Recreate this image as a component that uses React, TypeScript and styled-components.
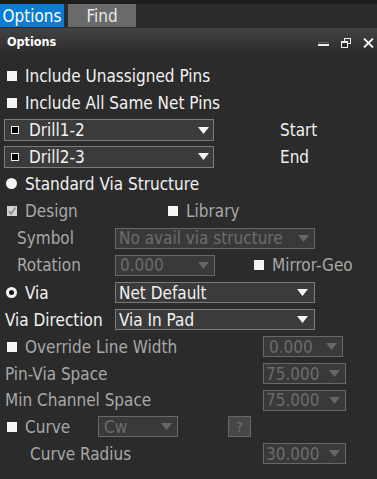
import React from "react";
import styled, { createGlobalStyle, css } from "styled-components";

const GlobalStyle = createGlobalStyle`
  html, body { margin: 0; padding: 0; background: #2b2b2b; overflow: hidden; }
  * { box-sizing: border-box; }
`;

const FONT = `"DejaVu Sans Condensed", "DejaVu Sans", sans-serif`;

const Frame = styled.div`
  width: 377px;
  height: 479px;
  display: flex;
  flex-direction: column;
  background: #2b2b2b;
  font-family: ${FONT};
  font-stretch: condensed;
  font-size: 17px;
  line-height: 20px;
  color: #f0f0f0;
`;

const TabBar = styled.div`
  height: 28px;
  padding-top: 4px;
  padding-bottom: 1px;
  display: flex;
  gap: 4px;
  background: #2c2c2c;
  box-shadow: inset 0 4px 0 #1d1d1d;
`;

const Tab = styled.div<{ $active?: boolean }>`
  width: ${(p) => (p.$active ? 64 : 68)}px;
  display: flex;
  align-items: center;
  justify-content: center;
  background: ${(p) => (p.$active ? "#0b7bd5" : "#6a6a6a")};
  color: ${(p) => (p.$active ? "#ffffff" : "#e8e8e8")};
`;

const TitleBar = styled.div`
  height: 27px;
  display: flex;
  align-items: center;
  justify-content: space-between;
  padding: 0 3px 0 7px;
  background: linear-gradient(#424242, #2b2b2b);
`;

const Title = styled.div`
  font-weight: bold;
  font-size: 12.5px;
  line-height: 16px;
  color: #ffffff;
`;

const Controls = styled.div`
  display: flex;
  align-items: center;
  gap: 12px;
  padding-top: 2px;
`;

const Body = styled.div`
  display: flex;
  flex-direction: column;
  padding-top: 7px;
`;

const Row = styled.div<{ $h: number; $pl?: number }>`
  height: ${(p) => p.$h}px;
  display: flex;
  align-items: center;
  padding-left: ${(p) => p.$pl ?? 0}px;
  white-space: nowrap;
`;

const Cell = styled.div<{ $w: number; $pl?: number }>`
  width: ${(p) => p.$w}px;
  flex: none;
  display: flex;
  align-items: center;
  padding-left: ${(p) => p.$pl ?? 0}px;
`;

const Label = styled.span<{ $dim?: boolean }>`
  color: ${(p) => (p.$dim ? "#a8a8a8" : "#f2f2f2")};
`;

const Box = styled.span<{ $checked?: boolean }>`
  width: 10px;
  height: 10px;
  flex: none;
  margin-left: 7px;
  margin-right: 8px;
  background: ${(p) => (p.$checked ? "#d2d2d2" : "#f4f4f4")};
  display: flex;
  align-items: center;
  justify-content: center;
`;

const Radio = styled.span<{ $ring?: boolean }>`
  width: 11px;
  height: 11px;
  flex: none;
  margin-left: 6px;
  margin-right: 8px;
  border-radius: 50%;
  background: #f4f4f4;
  ${(p) =>
    p.$ring &&
    css`
      background: #111;
      border: 3px solid #f4f4f4;
    `}
`;

const Select = styled.div<{ $w: number; $h?: number; $disabled?: boolean; $pl?: number; $pr?: number }>`
  width: ${(p) => p.$w}px;
  height: ${(p) => p.$h ?? 21}px;
  flex: none;
  display: flex;
  align-items: center;
  padding: 0 ${(p) => p.$pr ?? 5}px 0 ${(p) => p.$pl ?? 3}px;
  border: 1px solid ${(p) => (p.$disabled ? "#686868" : "#7c7c7c")};
  background: ${(p) => (p.$disabled ? "#393939" : "#3b3b3b")};
  color: ${(p) => (p.$disabled ? "#6c6c6c" : "#f2f2f2")};
`;

const SelectText = styled.span`
  flex: 1;
  min-width: 0;
`;

const Mini = styled.span`
  width: 8px;
  height: 8px;
  flex: none;
  margin: 0 10px 0 6px;
  border: 1px solid #f0f0f0;
  background: #000;
`;

const QButton = styled.div`
  width: 23px;
  height: 21px;
  flex: none;
  display: flex;
  align-items: center;
  justify-content: center;
  background: #474747;
  border: 1px solid #686868;
  color: #707070;
  font-size: 14px;
  line-height: 16px;
`;

const Side = styled.span<{ $ml: number }>`
  margin-left: ${(p) => p.$ml}px;
`;

const Arrow = ({ dim }: { dim?: boolean }) => (
  <svg width="11" height="7" viewBox="0 0 11 7" style={{ flex: "none" }}>
    <polygon points="0,0 11,0 5.5,7" fill={dim ? "#666666" : "#f4f4f4"} />
  </svg>
);

const Check = () => (
  <svg width="10" height="10" viewBox="0 0 10 10">
    <polyline points="2,5 4,8 8.5,1.5" fill="none" stroke="#8a8a8a" strokeWidth="1.4" />
  </svg>
);

const MinIcon = () => (
  <svg width="11" height="10" viewBox="0 0 11 10">
    <rect x="0" y="6" width="11" height="2" fill="#eeeeee" />
    <rect x="0" y="4" width="11" height="1" fill="#666" />
  </svg>
);

const RestoreIcon = () => (
  <svg width="10" height="10" viewBox="0 0 10 10">
    <rect x="3.5" y="0.5" width="6" height="5" fill="none" stroke="#eeeeee" strokeWidth="1" />
    <rect x="0.5" y="3.5" width="6" height="6" fill="#2f2f2f" stroke="#eeeeee" strokeWidth="1" />
    <rect x="0.5" y="3.5" width="6" height="1.5" fill="#eeeeee" />
  </svg>
);

const CloseIcon = () => (
  <svg width="11" height="10" viewBox="0 0 11 10">
    <path d="M1 0.5 L10 9.5 M10 0.5 L1 9.5" stroke="#f4f4f4" strokeWidth="1.8" />
  </svg>
);

export default function App() {
  return (
    <>
      <GlobalStyle />
      <Frame>
        <TabBar>
          <Tab $active>Options</Tab>
          <Tab>Find</Tab>
        </TabBar>
        <TitleBar>
          <Title>Options</Title>
          <Controls>
            <MinIcon />
            <RestoreIcon />
            <CloseIcon />
          </Controls>
        </TitleBar>
        <Body>
          <Row $h={27}>
            <Box />
            <Label>Include Unassigned Pins</Label>
          </Row>
          <Row $h={28}>
            <Box />
            <Label>Include All Same Net Pins</Label>
          </Row>
          <Row $h={26} $pl={4}>
            <Select $w={210} $h={22} $pl={0} $pr={4}>
              <Mini />
              <SelectText>Drill1-2</SelectText>
              <Arrow />
            </Select>
            <Side $ml={66}>Start</Side>
          </Row>
          <Row $h={27} $pl={4}>
            <Select $w={210} $h={22} $pl={0} $pr={4}>
              <Mini />
              <SelectText>Drill2-3</SelectText>
              <Arrow />
            </Select>
            <Side $ml={66}>End</Side>
          </Row>
          <Row $h={27}>
            <Radio />
            <Label>Standard Via Structure</Label>
          </Row>
          <Row $h={28}>
            <Cell $w={161}>
              <Box $checked>
                <Check />
              </Box>
              <Label $dim>Design</Label>
            </Cell>
            <Box />
            <Label $dim>Library</Label>
          </Row>
          <Row $h={26}>
            <Cell $w={115} $pl={17}>
              <Label $dim>Symbol</Label>
            </Cell>
            <Select $w={200} $disabled>
              <SelectText>No avail via structure</SelectText>
              <Arrow dim />
            </Select>
          </Row>
          <Row $h={28}>
            <Cell $w={115} $pl={17}>
              <Label $dim>Rotation</Label>
            </Cell>
            <Select $w={100} $disabled $pl={4}>
              <SelectText>0.000</SelectText>
              <Arrow dim />
            </Select>
            <Cell $w={32} />
            <Box />
            <Label $dim>Mirror-Geo</Label>
          </Row>
          <Row $h={27}>
            <Cell $w={115}>
              <Radio $ring />
              <Label>Via</Label>
            </Cell>
            <Select $w={200} $pr={6}>
              <SelectText>Net Default</SelectText>
              <Arrow />
            </Select>
          </Row>
          <Row $h={27}>
            <Cell $w={115} $pl={5}>
              <Label>Via Direction</Label>
            </Cell>
            <Select $w={200} $pr={6}>
              <SelectText>Via In Pad</SelectText>
              <Arrow />
            </Select>
          </Row>
          <Row $h={27}>
            <Cell $w={263}>
              <Box />
              <Label $dim>Override Line Width</Label>
            </Cell>
            <Select $w={80} $disabled $pl={5}>
              <SelectText>0.000</SelectText>
              <Arrow dim />
            </Select>
          </Row>
          <Row $h={27}>
            <Cell $w={263} $pl={5}>
              <Label $dim>Pin-Via Space</Label>
            </Cell>
            <Select $w={83} $disabled $pl={2}>
              <SelectText>75.000</SelectText>
              <Arrow dim />
            </Select>
          </Row>
          <Row $h={26}>
            <Cell $w={263} $pl={5}>
              <Label $dim>Min Channel Space</Label>
            </Cell>
            <Select $w={83} $disabled $pl={2}>
              <SelectText>75.000</SelectText>
              <Arrow dim />
            </Select>
          </Row>
          <Row $h={27}>
            <Cell $w={98}>
              <Box />
              <Label $dim>Curve</Label>
            </Cell>
            <Select $w={80} $disabled $pl={5}>
              <SelectText>Cw</SelectText>
              <Arrow dim />
            </Select>
            <Cell $w={50} />
            <QButton>?</QButton>
          </Row>
          <Row $h={27}>
            <Cell $w={263} $pl={30}>
              <Label $dim>Curve Radius</Label>
            </Cell>
            <Select $w={83} $disabled $pl={2}>
              <SelectText>30.000</SelectText>
              <Arrow dim />
            </Select>
          </Row>
        </Body>
      </Frame>
    </>
  );
}
